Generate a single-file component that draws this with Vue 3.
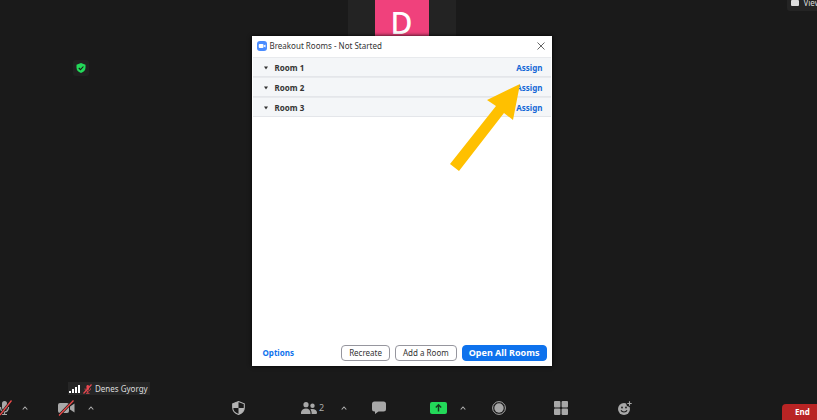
<script setup>
import { ref } from 'vue'

const rooms = ref([
  { id: 1, name: 'Room 1' },
  { id: 2, name: 'Room 2' },
  { id: 3, name: 'Room 3' },
])
</script>

<template>
  <div class="meeting">
    <main class="stage">
      <div class="tile"><span class="avatar">D</span></div>

      <button class="secure" aria-label="Meeting information">
        <svg width="10" height="10" viewBox="0 0 20 20">
          <path d="M10 0 L19 3.500 V9 C19 14.500 15.500 18 10 20 C4.500 18 1 14.500 1 9 V3.500 Z" fill="#23d959" />
          <path d="M5.500 10 L9 13.300 L14.800 7" fill="none" stroke="#1a1a1a" stroke-width="2.200" />
        </svg>
      </button>

      <button class="view">
        <svg width="8" height="6" viewBox="0 0 8 6"><rect width="8" height="6" rx="1" fill="#dedede" /></svg>
        <span>View</span>
      </button>

      <section class="dialog" role="dialog" aria-labelledby="dialog-title">
        <header class="titlebar">
          <svg width="10" height="10" viewBox="0 0 20 20">
            <rect width="20" height="20" rx="6" fill="#4a8cff" />
            <rect x="3.500" y="6" width="9.500" height="8" rx="2" fill="#fff" />
            <path d="M13.800 9 L17 6.800 V13.200 L13.800 11 Z" fill="#fff" />
          </svg>
          <h1 id="dialog-title">Breakout Rooms - Not Started</h1>
          <button class="close" aria-label="Close">
            <svg width="8" height="8" viewBox="0 0 8 8"><path d="M0.500 0.500 L7.500 7.500 M7.500 0.500 L0.500 7.500" stroke="#555" stroke-width="0.900" /></svg>
          </button>
        </header>

        <ul class="rooms">
          <li v-for="room in rooms" :key="room.id">
            <button class="room">
              <svg width="4" height="4" viewBox="0 0 4 4"><path d="M0 0.500 H4 L2 3.500 Z" fill="#333" /></svg>
              <span>{{ room.name }}</span>
            </button>
            <button class="assign">Assign</button>
          </li>
        </ul>

        <footer class="actions">
          <button class="options">Options</button>
          <button class="btn">Recreate</button>
          <button class="btn">Add a Room</button>
          <button class="btn primary">Open All Rooms</button>
        </footer>

        <svg class="pointer" width="72" height="90" viewBox="0 0 72 90" aria-hidden="true">
          <path d="M70 0 L63 36 L54 29 L9 87 L0 80 L46 22 L37 16 Z" fill="#ffc000" />
        </svg>
      </section>
    </main>

    <div class="speaker">
      <svg width="11" height="9" viewBox="0 0 11 9" fill="#fff">
        <rect x="0" y="7" width="2" height="2" /><rect x="3" y="5" width="2" height="4" />
        <rect x="6" y="3" width="2" height="6" /><rect x="9" y="1" width="2" height="8" />
      </svg>
      <svg width="9" height="10" viewBox="0 0 9 10" fill="none" stroke="#e8474f">
        <rect x="3.500" y="1" width="2.500" height="5" rx="1.200" fill="#e8474f" stroke="none" />
        <path d="M2 4.500 C2 8 7.500 8 7.500 4.500 M4.700 7 V9 M3 9.300 H6.500" stroke-width="0.900" />
        <path d="M8.500 0.500 L0.500 9.500" stroke-width="1.200" />
      </svg>
      <span>Denes Gyorgy</span>
    </div>

    <nav class="toolbar" aria-label="Meeting controls">
      <div class="devices">
        <button aria-label="Unmute">
          <svg width="12" height="16" viewBox="0 0 12 16">
            <rect x="2" y="1" width="5" height="9" rx="2.500" fill="#a8a8a8" />
            <path d="M0.500 7 C0.500 13.500 8.500 13.500 8.500 7 M4.500 12 V14.500 M2 14.500 H7" fill="none" stroke="#a8a8a8" stroke-width="1.200" />
            <path d="M11.500 0.500 L0 15" stroke="#1a1a1a" stroke-width="2.600" />
            <path d="M11.500 0.500 L0 15" stroke="#ee4b4b" stroke-width="1.300" />
          </svg>
        </button>
        <button aria-label="Audio options">
          <svg width="6" height="4" viewBox="0 0 6 4"><path d="M0.700 3.500 L3 1 L5.300 3.500" fill="none" stroke="#b0b0b0" stroke-width="1.100" /></svg>
        </button>
        <button aria-label="Start video">
          <svg width="17" height="16" viewBox="0 0 17 16">
            <rect x="0" y="3" width="11" height="10" rx="2" fill="#a8a8a8" />
            <path d="M12 6.500 L16.500 3.500 V12.500 L12 9.500 Z" fill="#a8a8a8" />
            <path d="M15.500 0.500 L1 15.500" stroke="#1a1a1a" stroke-width="2.600" />
            <path d="M15.500 0.500 L1 15.500" stroke="#ee4b4b" stroke-width="1.300" />
          </svg>
        </button>
        <button aria-label="Video options">
          <svg width="6" height="4" viewBox="0 0 6 4"><path d="M0.700 3.500 L3 1 L5.300 3.500" fill="none" stroke="#b0b0b0" stroke-width="1.100" /></svg>
        </button>
      </div>

      <div class="tools">
        <button aria-label="Security">
          <svg width="13" height="14" viewBox="0 0 13 14">
            <path d="M6.500 0.600 L12.300 2.800 V6.500 C12.300 10 10 12.300 6.500 13.400 C3 12.300 0.700 10 0.700 6.500 V2.800 Z" fill="#1a1a1a" stroke="#b4b4b4" stroke-width="1.100" />
            <path d="M6.500 0.600 V7 H0.700 V2.800 Z M6.500 7 H12.300 C12 10.500 9.500 12.500 6.500 13.400 Z" fill="#b4b4b4" />
          </svg>
        </button>
        <button aria-label="Participants, 2">
          <svg width="16" height="12" viewBox="0 0 16 12" fill="#a8a8a8">
            <circle cx="5" cy="2.700" r="2.600" /><circle cx="11.500" cy="3.700" r="2.200" />
            <path d="M0 12 C-0.500 8.500 2 6.500 5 6.500 C8 6.500 9.800 8.500 9.500 12 Z M10.600 12 C10.800 10 10.200 8.500 9.300 7.500 C12.500 6.200 16.200 8 16 11 Q16 12 15 12 Z" />
          </svg>
          <span class="count">2</span>
        </button>
        <button aria-label="Participant options">
          <svg width="6" height="4" viewBox="0 0 6 4"><path d="M0.700 3.500 L3 1 L5.300 3.500" fill="none" stroke="#b0b0b0" stroke-width="1.100" /></svg>
        </button>
        <button aria-label="Chat">
          <svg width="14" height="13" viewBox="0 0 14 13"><path d="M2.500 0.500 H11.500 Q14 0.500 14 3 V8 Q14 10.500 11.500 10.500 H6.500 L3 13 V10.500 H2.500 Q0 10.500 0 8 V3 Q0 0.500 2.500 0.500 Z" fill="#a8a8a8" /></svg>
        </button>
        <button aria-label="Share screen">
          <svg width="17" height="12" viewBox="0 0 17 12">
            <rect width="17" height="12" rx="2" fill="#23d959" />
            <path d="M8.500 9.500 V3 M5.800 5.500 L8.500 2.800 L11.200 5.500" fill="none" stroke="#17381f" stroke-width="1.400" />
          </svg>
        </button>
        <button aria-label="Share options">
          <svg width="6" height="4" viewBox="0 0 6 4"><path d="M0.700 3.500 L3 1 L5.300 3.500" fill="none" stroke="#b0b0b0" stroke-width="1.100" /></svg>
        </button>
        <button aria-label="Record">
          <svg width="14" height="14" viewBox="0 0 14 14"><circle cx="7" cy="7" r="6.400" fill="none" stroke="#a8a8a8" stroke-width="1" /><circle cx="7" cy="7" r="4.700" fill="#a8a8a8" /></svg>
        </button>
        <button aria-label="Breakout rooms">
          <svg width="14" height="14" viewBox="0 0 14 14" fill="#a8a8a8">
            <rect width="6.400" height="6.400" rx="1" /><rect x="7.600" width="6.400" height="6.400" rx="1" />
            <rect y="7.600" width="6.400" height="6.400" rx="1" /><rect x="7.600" y="7.600" width="6.400" height="6.400" rx="1" />
          </svg>
        </button>
        <button aria-label="Reactions">
          <svg width="14" height="14" viewBox="0 0 14 14">
            <circle cx="6" cy="8" r="6" fill="#a8a8a8" />
            <circle cx="11.500" cy="2.500" r="3.200" fill="#1a1a1a" />
            <path d="M11.500 0.300 V4.700 M9.300 2.500 H13.700" stroke="#a8a8a8" stroke-width="1.100" />
            <circle cx="4" cy="6.500" r="0.900" fill="#1a1a1a" /><circle cx="8" cy="6.500" r="0.900" fill="#1a1a1a" />
            <path d="M3 9.300 C4 11.500 8 11.500 9 9.300" fill="none" stroke="#1a1a1a" stroke-width="1.100" />
          </svg>
        </button>
      </div>

      <button class="end">End</button>
    </nav>
  </div>
</template>

<style>
body {
  background: #1a1a1a;
}
</style>

<style scoped>
.meeting {
  position: relative;
  display: flex;
  flex-direction: column;
  height: 100vh;
  overflow: hidden;
  background: #1a1a1a;
  color: #ddd;
  font-family: "Noto Sans", "Open Sans", sans-serif;
  font-size: 8px;
  line-height: 12px;
}
button {
  display: flex;
  align-items: center;
  margin: 0;
  padding: 0;
  border: 0;
  background: none;
  color: inherit;
  font: inherit;
  white-space: nowrap;
  cursor: pointer;
}
svg {
  display: block;
  flex: none;
}
.stage {
  display: grid;
  flex: 1;
  justify-items: center;
  align-items: start;
  padding-right: 14px;
}
.tile,
.dialog {
  grid-area: 1 / 1;
}
.tile {
  display: flex;
  justify-content: center;
  width: 108px;
  height: 60px;
  background: #232323;
}
.avatar {
  width: 54px;
  height: 54px;
  background: #f0417c;
  color: #fff;
  font-size: 30px;
  font-weight: 500;
  line-height: 46px;
  text-align: center;
}
.secure {
  position: absolute;
  top: 60px;
  left: 73px;
  justify-content: center;
  width: 16px;
  height: 16px;
  border-radius: 3px;
  background: #212121;
}
.view {
  position: absolute;
  top: -4px;
  right: -8px;
  gap: 4px;
  padding: 1px 4px 2px;
  border-radius: 3px;
  background: #242424;
}
.dialog {
  position: relative;
  display: flex;
  flex-direction: column;
  width: 300px;
  min-height: 330px;
  box-sizing: border-box;
  margin-top: 36px;
  padding: 0 1px;
  background: #fff;
  color: #333;
  box-shadow: 0 0 4px #000;
}
.titlebar {
  display: flex;
  align-items: center;
  gap: 3px;
  box-sizing: border-box;
  height: 21px;
  padding: 0 6px 2px 4px;
}
h1 {
  flex: 1;
  margin: 0;
  font-size: 8px;
  font-weight: 400;
}
.rooms {
  margin: 0;
  padding: 0;
  list-style: none;
}
.rooms li {
  display: flex;
  align-items: center;
  justify-content: space-between;
  box-sizing: border-box;
  height: 20px;
  padding: 2px 8px 0 11px;
  border-top: 1px solid #e8eaed;
  border-bottom: 1px solid #e4e6ea;
  background: #f4f6f8;
  font-weight: 700;
}
.room {
  gap: 7px;
}
.assign {
  color: #1468d6;
}
.actions {
  display: flex;
  align-items: center;
  gap: 5px;
  margin-top: auto;
  padding: 0 4px 5px 10px;
}
.options {
  margin-right: auto;
  color: #0e72ed;
  font-weight: 700;
}
.btn {
  height: 16px;
  padding: 0 7px;
  border: 1px solid #96969e;
  border-radius: 4px;
}
.primary {
  padding: 0 6px;
  border-color: #0e72ed;
  background: #0e72ed;
  color: #fff;
  font-size: 9px;
  font-weight: 700;
}
.pointer {
  position: absolute;
  top: 48px;
  right: 30px;
  pointer-events: none;
}
.speaker {
  display: flex;
  align-items: center;
  align-self: flex-start;
  gap: 3px;
  height: 13px;
  margin-left: 68px;
  padding: 0 2px 0 1px;
  background: #262626;
}
.toolbar {
  display: flex;
  align-items: center;
  justify-content: space-between;
  height: 25px;
}
.devices,
.tools {
  display: grid;
  align-items: center;
  justify-items: start;
}
.devices {
  grid-template-columns: 22px 36px 30px 7px;
}
.tools {
  grid-template-columns: 69px 40px 31px 58px 30px 32px 62px 64px 14px;
  padding-right: 13px;
}
.tools button {
  gap: 2px;
}
.count {
  color: #aaa;
  font-size: 9px;
}
.end {
  align-self: flex-end;
  width: 35px;
  height: 16px;
  padding-left: 13px;
  border-radius: 4px 0 0 0;
  background: #b92424;
  color: #fff;
  font-weight: 700;
}
</style>
